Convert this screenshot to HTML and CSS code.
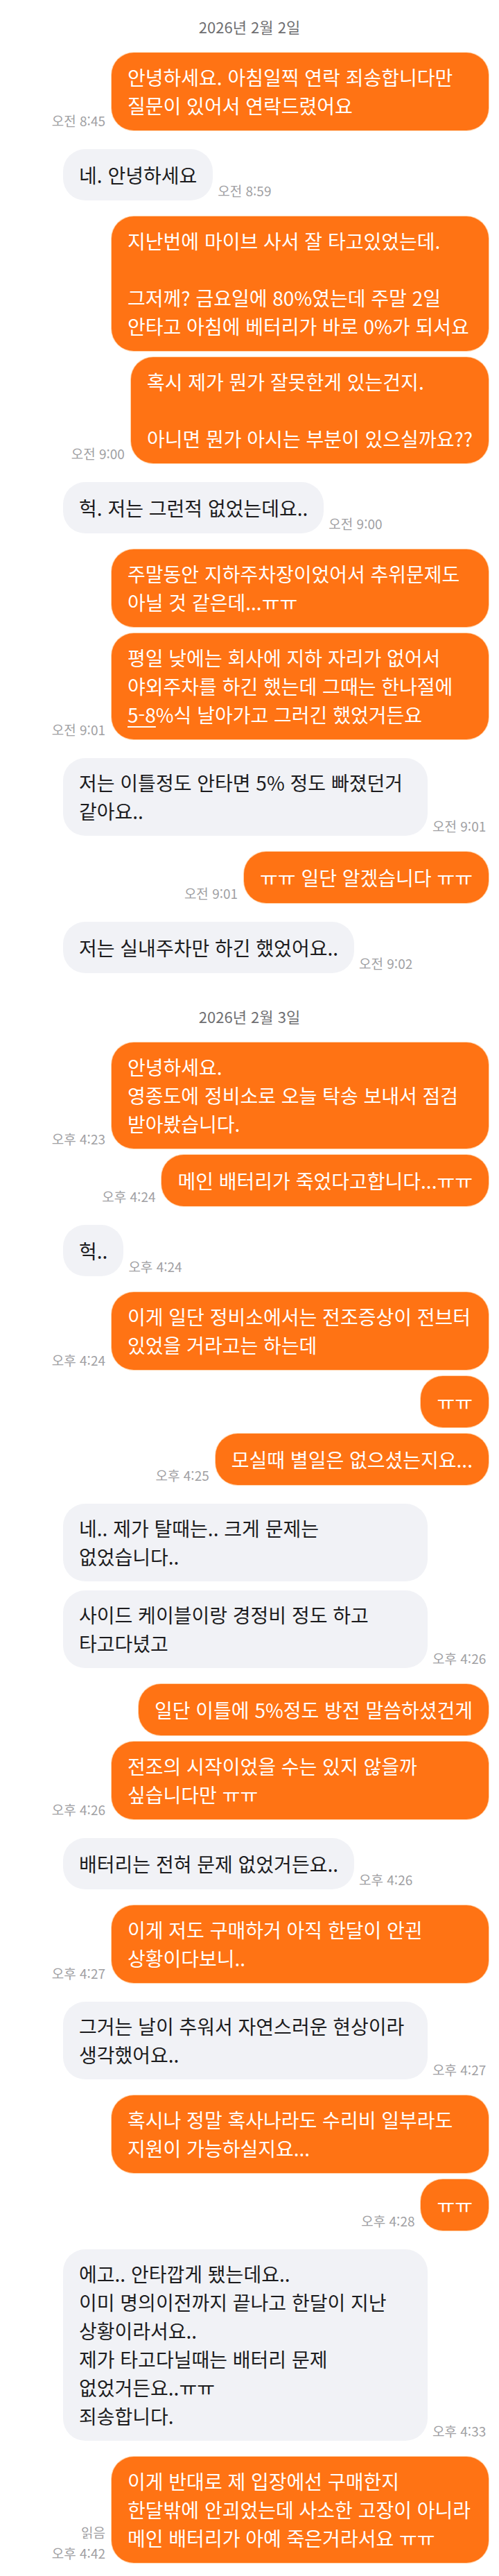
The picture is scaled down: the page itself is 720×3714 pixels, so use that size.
FILE: index.html
```html
<!DOCTYPE html>
<html lang="ko">
<head>
<meta charset="utf-8">
<title>채팅</title>
<link rel="stylesheet" href="styles.css">
</head>
<body>
<main class="chat">
  <div class="date">2026년 2월 2일</div>

  <div class="row sent">
    <span class="ts">오전 8:45</span>
    <div class="bubble full"><span class="t">안녕하세요. 아침일찍 연락 죄송합니다만<br>질문이 있어서 연락드렸어요</span></div>
  </div>
  <div class="row recv">
    <div class="bubble"><span class="t">네. 안녕하세요</span></div>
    <span class="ts">오전 8:59</span>
  </div>
  <div class="row sent">
    <div class="bubble full"><span class="t">지난번에 마이브 사서 잘 타고있었는데.<br><br>그저께? 금요일에 80%였는데 주말 2일<br>안타고 아침에 베터리가 바로 0%가 되서요</span></div>
  </div>
  <div class="row sent">
    <span class="ts">오전 9:00</span>
    <div class="bubble"><span class="t">혹시 제가 뭔가 잘못한게 있는건지.<br><br>아니면 뭔가 아시는 부분이 있으실까요??</span></div>
  </div>
  <div class="row recv">
    <div class="bubble"><span class="t">헉. 저는 그런적 없었는데요..</span></div>
    <span class="ts">오전 9:00</span>
  </div>
  <div class="row sent">
    <div class="bubble full"><span class="t">주말동안 지하주차장이었어서 추위문제도<br>아닐 것 같은데...ㅠㅠ</span></div>
  </div>
  <div class="row sent">
    <span class="ts">오전 9:01</span>
    <div class="bubble full"><span class="t">평일 낮에는 회사에 지하 자리가 없어서<br>야외주차를 하긴 했는데 그때는 한나절에<br><u class="link">5-8</u>%식 날아가고 그러긴 했었거든요</span></div>
  </div>
  <div class="row recv">
    <div class="bubble full"><span class="t">저는 이틀정도 안타면 5% 정도 빠졌던거<br>같아요..</span></div>
    <span class="ts">오전 9:01</span>
  </div>
  <div class="row sent">
    <span class="ts">오전 9:01</span>
    <div class="bubble"><span class="t">ㅠㅠ 일단 알겠습니다 ㅠㅠ</span></div>
  </div>
  <div class="row recv">
    <div class="bubble"><span class="t">저는 실내주차만 하긴 했었어요..</span></div>
    <span class="ts">오전 9:02</span>
  </div>

  <div class="date">2026년 2월 3일</div>

  <div class="row sent">
    <span class="ts">오후 4:23</span>
    <div class="bubble full"><span class="t">안녕하세요.<br>영종도에 정비소로 오늘 탁송 보내서 점검<br>받아봤습니다.</span></div>
  </div>
  <div class="row sent">
    <span class="ts">오후 4:24</span>
    <div class="bubble"><span class="t">메인 배터리가 죽었다고합니다...ㅠㅠ</span></div>
  </div>
  <div class="row recv">
    <div class="bubble"><span class="t">헉..</span></div>
    <span class="ts">오후 4:24</span>
  </div>
  <div class="row sent">
    <span class="ts">오후 4:24</span>
    <div class="bubble full"><span class="t">이게 일단 정비소에서는 전조증상이 전브터<br>있었을 거라고는 하는데</span></div>
  </div>
  <div class="row sent">
    <div class="bubble"><span class="t">ㅠㅠ</span></div>
  </div>
  <div class="row sent">
    <span class="ts">오후 4:25</span>
    <div class="bubble"><span class="t">모실때 별일은 없으셨는지요...</span></div>
  </div>
  <div class="row recv">
    <div class="bubble full"><span class="t">네.. 제가 탈때는.. 크게 문제는<br>없었습니다..</span></div>
  </div>
  <div class="row recv">
    <div class="bubble full"><span class="t">사이드 케이블이랑 경정비 정도 하고<br>타고다녔고</span></div>
    <span class="ts">오후 4:26</span>
  </div>
  <div class="row sent">
    <div class="bubble"><span class="t">일단 이틀에 5%정도 방전 말씀하셨건게</span></div>
  </div>
  <div class="row sent">
    <span class="ts">오후 4:26</span>
    <div class="bubble full"><span class="t">전조의 시작이었을 수는 있지 않을까<br>싶습니다만 ㅠㅠ</span></div>
  </div>
  <div class="row recv">
    <div class="bubble"><span class="t">배터리는 전혀 문제 없었거든요..</span></div>
    <span class="ts">오후 4:26</span>
  </div>
  <div class="row sent">
    <span class="ts">오후 4:27</span>
    <div class="bubble full"><span class="t">이게 저도 구매하거 아직 한달이 안괸<br>상황이다보니..</span></div>
  </div>
  <div class="row recv">
    <div class="bubble full"><span class="t">그거는 날이 추워서 자연스러운 현상이라<br>생각했어요..</span></div>
    <span class="ts">오후 4:27</span>
  </div>
  <div class="row sent">
    <div class="bubble full"><span class="t">혹시나 정말 혹사나라도 수리비 일부라도<br>지원이 가능하실지요...</span></div>
  </div>
  <div class="row sent">
    <span class="ts">오후 4:28</span>
    <div class="bubble"><span class="t">ㅠㅠ</span></div>
  </div>
  <div class="row recv">
    <div class="bubble full"><span class="t">에고.. 안타깝게 됐는데요..<br>이미 명의이전까지 끝나고 한달이 지난<br>상황이라서요..<br>제가 타고다닐때는 배터리 문제<br>없었거든요..ㅠㅠ<br>죄송합니다.</span></div>
    <span class="ts">오후 4:33</span>
  </div>
  <div class="row sent">
    <div class="meta">
      <span class="read">읽음</span>
      <span class="ts">오후 4:42</span>
    </div>
    <div class="bubble full"><span class="t">이게 반대로 제 입장에선 구매한지<br>한달밖에 안괴었는데 사소한 고장이 아니라<br>메인 배터리가 아예 죽은거라서요 ㅠㅠ</span></div>
  </div>
</main>
</body>
</html>
```

FILE: styles.css
```css
html, body {
  margin: 0;
  padding: 0;
  background: #ffffff;
}

body {
  font-family: "Noto Sans CJK KR", "Noto Sans", "Liberation Sans", sans-serif;
}

.chat {
  width: 720px;
  box-sizing: border-box;
  padding: 23px 15px 10px 0;
  display: flex;
  flex-direction: column;
}

.date {
  height: 30px;
  line-height: 30px;
  text-align: center;
  font-size: 22px;
  color: #6f6f72;
  padding-left: 15px;
}

.row {
  display: flex;
  align-items: flex-end;
}

.row.sent {
  justify-content: flex-end;
  gap: 9px;
}

.row.recv {
  justify-content: flex-start;
  padding-left: 91px;
  gap: 7px;
}

/* vertical rhythm between messages */
.sent + .sent { margin-top: 9px; }
.recv + .recv { margin-top: 13px; }
.recv + .sent { margin-top: 23px; }
.sent + .recv { margin-top: 27px; }
.date + .row { margin-top: 23px; }
.row + .date { margin-top: 47px; }

.bubble {
  box-sizing: border-box;
  min-height: 74px;
  padding: 15px 23px;
  border-radius: 32px;
  display: flex;
  align-items: center;
  font-size: 28px;
  line-height: 41px;
  white-space: nowrap;
}

.sent .bubble {
  background: #ff7314;
  color: #ffffff;
  box-shadow: 0 0 0 1px #ffd4ad;
}

.recv .bubble {
  background: #f1f2f6;
  color: #1c1c1e;
}

.sent .bubble.full { width: 544px; }
.recv .bubble.full { width: 526px; }

.link {
  text-decoration: underline;
  text-decoration-thickness: 2px;
  text-underline-offset: 5px;
}

.ts {
  font-size: 19px;
  line-height: 20px;
  color: #a0a0a3;
  white-space: nowrap;
  margin-bottom: 4px;
}

.meta {
  display: flex;
  flex-direction: column;
  align-items: flex-end;
  gap: 10px;
}

.meta .ts {
  margin-bottom: 4px;
}

.read {
  font-size: 19px;
  line-height: 20px;
  color: #a0a0a3;
}
```
